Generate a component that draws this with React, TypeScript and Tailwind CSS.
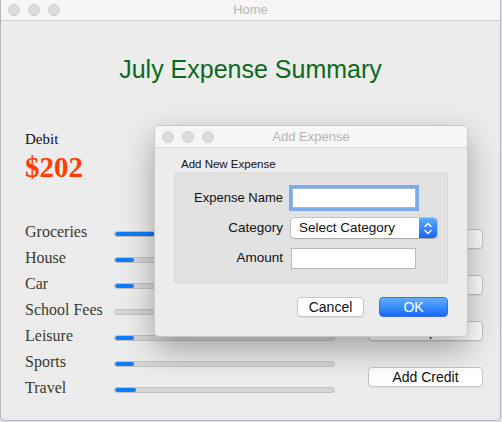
import React from 'react';

const rows = [
  { name: 'Groceries', fill: 120 },
  { name: 'House', fill: 19 },
  { name: 'Car', fill: 19 },
  { name: 'School Fees', fill: 0 },
  { name: 'Leisure', fill: 19 },
  { name: 'Sports', fill: 19 },
  { name: 'Travel', fill: 21 },
];

const actions = ['Set Budget', 'View Report', 'Add Expense', 'Add Credit'];

const Lights: React.FC = () => (
  <div className="flex items-center gap-[8px]">
    {[0, 1, 2].map((i) => (
      <span key={i} className="block h-[12px] w-[12px] rounded-full bg-[#dcdcdc] border border-[#d0d0d0]" />
    ))}
  </div>
);

const AddExpenseDialog: React.FC = () => (
  <div className="absolute left-[154px] top-[125px] w-[314px] h-[212px] rounded-[5px] bg-[#ececec] border border-[#c9c9c9] shadow-[0_12px_32px_rgba(0,0,0,0.32)] overflow-hidden">
    {/* title bar */}
    <div className="relative h-[22px] bg-[#f6f6f6] border-b border-[#d8d8d8] flex items-center px-[7px]">
      <Lights />
      <span className="absolute inset-x-0 top-0 text-center text-[13px] leading-[22px] text-[#b5b5b5]">Add Expense</span>
    </div>

    <div className="pl-[19px] pr-[19px]">
      <div className="pl-[7px] pt-[9px] text-[11.5px] leading-[14px] text-[#111]">Add New Expense</div>

      <div className="mt-[1px] h-[112px] rounded-[4px] bg-[#e2e2e2] border border-[#dadada] pt-[15px] flex flex-col gap-[10px]">
        <div className="flex items-center h-[20px]">
          <span className="w-[108px] text-right text-[13px] text-[#111]">Expense Name</span>
          <div className="ml-[9px] w-[124px] h-[20px] bg-white border border-[#9fb8e0] shadow-[0_0_0_3px_rgba(100,156,236,0.8)]" />
        </div>
        <div className="flex items-center h-[20px]">
          <span className="w-[108px] text-right text-[13.5px] text-[#111]">Category</span>
          <div className="ml-[8px] w-[146px] h-[20px] flex rounded-[4px] bg-white shadow-[0_0_0_1px_rgba(0,0,0,0.14),0_1px_1px_rgba(0,0,0,0.15)] overflow-hidden">
            <span className="flex-1 pl-[8px] text-[13.5px] leading-[20px] text-[#111]">Select Category</span>
            <span className="w-[18px] h-[20px] flex items-center justify-center bg-gradient-to-b from-[#5eaafc] to-[#1a63f5]">
              <svg width="8" height="13" viewBox="0 0 8 13" fill="none" stroke="white" strokeWidth="1.4" strokeLinecap="round" strokeLinejoin="round">
                <path d="M1 4.5 L4 1.5 L7 4.5" />
                <path d="M1 8.5 L4 11.5 L7 8.5" />
              </svg>
            </span>
          </div>
        </div>
        <div className="flex items-center h-[21px]">
          <span className="w-[108px] text-right text-[13.5px] text-[#111]">Amount</span>
          <div className="ml-[8px] w-[125px] h-[21px] bg-white border border-[#b9b9b9]" />
        </div>
      </div>

      <div className="mt-[13px] flex justify-end gap-[15px]">
        <button className="w-[67px] h-[20px] rounded-[4px] bg-white border border-[#c6c6c6] shadow-[0_1px_0_rgba(0,0,0,0.06)] text-[14px] leading-[18px] text-[#111]">
          Cancel
        </button>
        <button className="w-[69px] h-[20px] rounded-[4px] bg-gradient-to-b from-[#62aefc] to-[#1768f6] border border-[#3c6af0] text-[14px] leading-[18px] text-white">
          OK
        </button>
      </div>
    </div>
  </div>
);

export default function App() {
  return (
    <div className="relative w-[502px] h-[422px] bg-[#dde1e6] font-['Liberation_Sans',Arial,sans-serif]">
      <div className="w-[501px] h-[421px] bg-[#ececec] border-x border-b border-[#b7b7b7] rounded-b-[5px] flex flex-col overflow-hidden">
        {/* window title bar */}
        <div className="relative h-[21px] shrink-0 bg-[#f6f6f6] border-b border-[#d2d2d2] flex items-center px-[7px]">
          <Lights />
          <span className="absolute inset-x-0 top-0 text-center text-[13px] leading-[20px] text-[#b8b8b8]">Home</span>
        </div>

        <h1 className="mt-[33px] text-center text-[25px] leading-[30px] text-[#0a6a1c]">July Expense Summary</h1>

        <div className="mt-[46px] pl-[24px] font-['Liberation_Serif','Times_New_Roman',serif]">
          <div className="text-[15px] leading-[18px] text-[#111]">Debit</div>
          <div className="mt-[3px] text-[29px] leading-[32px] font-bold text-[#ff3d00]">$202</div>
        </div>

        <div className="mt-[35px] pl-[24px] flex">
          <div className="flex flex-col">
            {rows.map((r) => (
              <div key={r.name} className="flex items-center h-[26px]">
                <span className="w-[89px] pt-[2px] font-['Liberation_Serif','Times_New_Roman',serif] text-[16px] text-[#3a3a2c]">{r.name}</span>
                <div className="mt-[6px] w-[221px] h-[6px] rounded-full bg-[#d6d6d6] border border-[#c2c2c2] overflow-hidden">
                  <div className="h-full rounded-full bg-[#0f7cf8]" style={{ width: r.fill }} />
                </div>
              </div>
            ))}
          </div>

          <div className="ml-[33px] pt-[11px] flex flex-col gap-[26px]">
            {actions.map((a) => (
              <button key={a} className="w-[115px] h-[20px] rounded-[4px] bg-white border border-[#c4c4c4] shadow-[0_1px_0_rgba(0,0,0,0.05)] text-[14px] leading-[18px] text-[#111]">
                {a}
              </button>
            ))}
          </div>
        </div>
      </div>

      <AddExpenseDialog />
    </div>
  );
}
